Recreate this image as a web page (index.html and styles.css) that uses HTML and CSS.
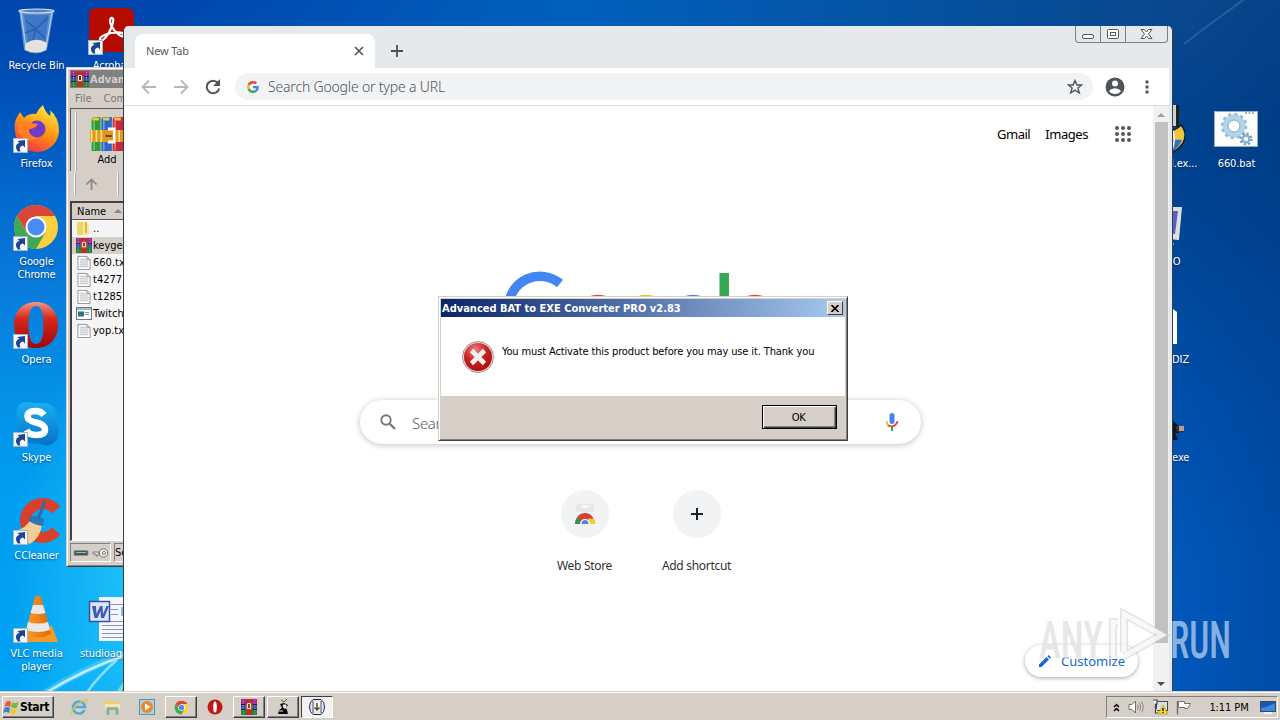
FILE: index.html
```html
<!DOCTYPE html>
<html lang="en">
    <head>
        <meta charset="utf-8">
        <title>Desktop</title>
        <link rel="stylesheet" href="styles.css">
    </head>
    <body>
        <!-- shared icons -->
        <svg class="defs" width="0" height="0">
            <defs>
                <linearGradient id="gOpera" x1="0" y1="0" x2="0" y2="1">
                    <stop offset="0" stop-color="#f09888"/><stop offset=".35" stop-color="#d8281c"/><stop offset="1" stop-color="#a00808"/>
                </linearGradient>
                <linearGradient id="gFox" x1=".8" y1="0" x2=".3" y2="1">
                    <stop offset="0" stop-color="#fff04a"/><stop offset=".5" stop-color="#ff980e"/><stop offset="1" stop-color="#f5304a"/>
                </linearGradient>
                <linearGradient id="gSkype" x1="0" y1="0" x2="0" y2="1">
                    <stop offset="0" stop-color="#1ab0f0"/><stop offset="1" stop-color="#0672c8"/>
                </linearGradient>
                <linearGradient id="gCone" x1="0" y1="0" x2="1" y2="0">
                    <stop offset="0" stop-color="#ff9a2e"/><stop offset="1" stop-color="#e06a00"/>
                </linearGradient>
                <radialGradient id="gErr" cx=".4" cy=".25" r=".8">
                    <stop offset="0" stop-color="#e88080"/><stop offset=".5" stop-color="#c82420"/><stop offset="1" stop-color="#a80c0c"/>
                </radialGradient>
            </defs>
            <symbol id="arrow" viewBox="0 0 15 15">
                <rect x=".5" y=".5" width="14" height="14" fill="#f4f6fa" stroke="#a8b4c4"/>
                <path d="M5 13.500C1.500 9.500 3 5.500 6.500 5L4.500 3L12 2V9.500L10 7.500C7 8 6 10 7.500 13.500Z" fill="#1c4590"/>
            </symbol>
            <symbol id="chrome" viewBox="0 0 48 48">
                <circle cx="24" cy="24" r="22" fill="#fcd03f"/>
                <path d="M24 13H43.050A22 22 0 0 0 4.950 13L14.500 29Z" fill="#d9473a"/>
                <path d="M4.950 13A22 22 0 0 0 24 46L33.500 29.500L24 34L14.500 29.500Z" fill="#3fa757"/>
                <circle cx="24" cy="24" r="10.500" fill="#fff"/>
                <circle cx="24" cy="24" r="8.500" fill="#4a8af4"/>
            </symbol>
            <symbol id="opera" viewBox="0 0 48 48">
                <path fill-rule="evenodd" fill="url(#gOpera)" d="M24 1C38 1 46 11 46 24S38 47 24 47S2 37 2 24S10 1 24 1ZM24 5C18 5 16.500 14 16.500 24S18 43 24 43S31.500 34 31.500 24S30 5 24 5Z"/>
            </symbol>
            <symbol id="rar" viewBox="0 0 18 16" preserveAspectRatio="none">
                <path fill="#a02890" d="M0 0H18V5H0Z"/><path fill="#2458b8" d="M0 5.500H18V10H0Z"/><path fill="#20883c" d="M0 10.500H18V16H0Z"/>
                <path fill="#300c40" d="M0 5H18V6H0ZM0 10H18V11H0Z"/>
                <path fill="#c82c20" d="M6 0H12V16H6Z"/><path fill="#a86028" d="M5 5H13V11H5Z"/>
                <path fill="#702020" stroke="#fff" d="M7.500 4.500H10.500V9.500H7.500Z"/>
                <path fill="none" stroke="#e8d8b0" stroke-dasharray="1 1.500" d="M2.500 1V15M15.500 1V15" opacity=".7"/>
            </symbol>
            <symbol id="txt" viewBox="0 0 14 16">
                <path d="M.5 1.500H10L13.500 5V15.500H.5Z" fill="#fdfdfd" stroke="#8c9498"/>
                <path d="M10 1.500V5H13.500" fill="none" stroke="#8c9498"/>
                <path d="M2.500 4.500H9M2.500 6.500H11.500M2.500 8.500H11.500M2.500 10.500H11.500M2.500 12.500H11.500" stroke="#b4bcc4"/>
            </symbol>
            <symbol id="gmark" viewBox="0 0 48 48">
                <path fill="#ea4335" d="M24 9.500c3.540 0 6.710 1.220 9.210 3.600l6.850-6.850C35.900 2.380 30.470 0 24 0 14.620 0 6.510 5.380 2.560 13.220l7.980 6.190C12.430 13.720 17.740 9.500 24 9.500z"/>
                <path fill="#4285f4" d="M46.980 24.550c0-1.570-.15-3.090-.38-4.550H24v9.020h12.940c-.58 2.960-2.260 5.480-4.780 7.180l7.730 6c4.510-4.180 7.090-10.360 7.090-17.650z"/>
                <path fill="#fbbc05" d="M10.530 28.590c-.48-1.450-.76-2.990-.76-4.590s.27-3.140.76-4.590l-7.980-6.190C.92 16.460 0 20.120 0 24c0 3.880.92 7.540 2.560 10.780l7.970-6.190z"/>
                <path fill="#34a853" d="M24 48c6.480 0 11.930-2.130 15.890-5.810l-7.730-6c-2.150 1.450-4.920 2.300-8.160 2.300-6.260 0-11.570-4.220-13.470-9.910l-7.980 6.190C6.510 42.620 14.620 48 24 48z"/>
            </symbol>
            <symbol id="winicon" viewBox="0 0 16 14">
                <rect x=".5" y=".5" width="15" height="12" fill="#fff" stroke="#6c7888"/>
                <path d="M1 2H15" stroke="#a8b8cc" stroke-width="2"/>
                <rect x="2" y="4.500" width="6" height="5" fill="#2c7484"/><path d="M9 5.500H13M9 7.500H13" stroke="#70a080"/>
            </symbol>
        </svg>

        <div class="desktop">
            <svg class="beams" viewBox="0 0 1280 692">
                <path d="M40 696Q80 670 126 654" fill="none" stroke="#5fd4fa" stroke-width="7" opacity=".5"/>
                <path d="M44 694Q82 670 126 655" fill="none" stroke="#d4f6ff" stroke-width="2.500" opacity=".85"/>
                <path d="M86 694Q98 676 118 659" fill="none" stroke="#b8f0fc" stroke-width="2.500" opacity=".7"/>
                <path d="M116 696L128 678" fill="none" stroke="#7ce8c8" stroke-width="4" opacity=".8"/>
                <path d="M1184 44Q1215 20 1246 -2" fill="none" stroke="#6a98cc" stroke-width="2" opacity=".3"/>
            </svg>

            <div class="icons left">
                <div class="shortcut">
                    <svg width="48" height="48" viewBox="0 0 48 48">
                        <path d="M7 3L12 43Q24 50 35 43L42 3Z" fill="#a8c8ec" opacity=".55"/>
                        <path d="M12 8L16 36L33 36L37 8Z" fill="#2c68c0" opacity=".6"/>
                        <path d="M14 14L24 22L36 10M13 26L24 22L33 32M24 22L20 36" fill="none" stroke="#1c50a4" stroke-width="1.500" opacity=".6"/>
                        <path d="M9 5L14 41M40 5L34 41" stroke="#d8e8f8" stroke-width="1.200" opacity=".7"/>
                        <path d="M13 37Q24 29 35 36L34 43Q24 48 13 43Z" fill="#e4e2dc"/>
                        <ellipse cx="24.500" cy="4" rx="17.500" ry="2" fill="#5484b8" stroke="#d4e4f4" stroke-width="1.200"/>
                    </svg>
                    <span>Recycle Bin</span>
                </div>
                <div class="shortcut">
                    <svg width="48" height="48" viewBox="0 0 48 48">
                        <path fill="url(#gFox)" d="M4 14L8 7L12 13Q17 8 24 9Q26 4 31 0Q33 7 38 11Q39 7 38 5Q47 13 47 25A22 21.500 0 0 1 3 26Q2 19 4 14Z"/>
                        <circle cx="25" cy="24" r="8.500" fill="#6f3bc8"/>
                        <path d="M6 16Q14 15 18 18L26 19Q23 24 17 24Q16 32 26 33Q13 40 6 26Z" fill="#ff7f22"/>
                    </svg>
                    <svg class="arrow"><use href="#arrow"/></svg>
                    <span>Firefox</span>
                </div>
                <div class="shortcut">
                    <svg width="48" height="48"><use href="#chrome"/></svg>
                    <svg class="arrow"><use href="#arrow"/></svg>
                    <span>Google Chrome</span>
                </div>
                <div class="shortcut">
                    <svg width="48" height="48"><use href="#opera"/></svg>
                    <svg class="arrow"><use href="#arrow"/></svg>
                    <span>Opera</span>
                </div>
                <div class="shortcut">
                    <svg width="48" height="48" viewBox="0 0 48 48">
                        <path fill="url(#gSkype)" d="M5 9Q8 2 16 3Q20 4 24 4H34Q44 6 45 16Q45 22 46 28Q49 42 38 46Q33 47 28 45Q12 46 8 35Q3 22 5 9Z"/>
                        <path d="M32 16Q29 12 23.500 12Q15.500 12 15.500 17.500Q15.500 21.500 24 23.500Q33 25.500 33 30.500Q33 36 24 36Q17 36 14.500 31" fill="none" stroke="#fff" stroke-width="6.500"/>
                    </svg>
                    <svg class="arrow"><use href="#arrow"/></svg>
                    <span>Skype</span>
                </div>
                <div class="shortcut">
                    <svg width="48" height="48" viewBox="0 0 48 48">
                        <path d="M44 13A17 17 0 1 0 44 34" fill="none" stroke="#d8402c" stroke-width="11"/>
                        <path d="M4 34Q14 31 19 22L30 27Q29 40 18 47Q8 42 4 34Z" fill="#f3cf98"/>
                        <path d="M17 20Q24 17 32 22L31 29Q22 28 17 24Z" fill="#2878b8"/>
                        <path d="M26 22L33 4" stroke="#3468a8" stroke-width="3"/>
                    </svg>
                    <svg class="arrow"><use href="#arrow"/></svg>
                    <span>CCleaner</span>
                </div>
                <div class="shortcut">
                    <svg width="48" height="48" viewBox="0 0 48 48">
                        <path d="M10 33L40 31L46 47H5Z" fill="#f59a28"/>
                        <path d="M23 2Q26 -1 29 2L39 39Q26 46 13 39Z" fill="url(#gCone)"/>
                        <path d="M21 10H31L33.500 18Q26 20 18.500 18ZM16 27Q26 30 36 27L38 35Q26 39 14 35Z" fill="#e8e8e8"/>
                    </svg>
                    <svg class="arrow"><use href="#arrow"/></svg>
                    <span>VLC media player</span>
                </div>
            </div>

            <div class="icons second">
                <div class="shortcut">
                    <svg width="48" height="48" viewBox="0 0 48 48">
                        <rect x="2" y="1" width="45" height="44" rx="7" fill="#b30b00"/>
                        <path d="M13 33Q12 29 24 26Q36 24 37 28Q35 32 27 23Q21 15 24 11Q28 10 25 19Q21 29 16 33Q13 35 13 33Z" fill="none" stroke="#fff" stroke-width="2.200"/>
                    </svg>
                    <svg class="arrow"><use href="#arrow"/></svg>
                    <span>Acrobat</span>
                </div>
                <div class="shortcut last">
                    <svg width="48" height="48" viewBox="0 0 48 48">
                        <path d="M12 2H48V46H12Z" fill="#f6f8fc"/>
                        <path d="M24 9.500H46M24 14.500H31M24 19.500H31M15 26.500H45M15 30.500H45M15 34.500H45M15 38.500H45M15 42.500H45" stroke="#8494c8"/>
                        <rect x="34" y="12" width="13" height="9" fill="#8cb4e8"/>
                        <rect x="2.500" y="6.500" width="20" height="20" fill="#dce4f8" stroke="#3454a8" stroke-width="1.500"/>
                        <path d="M5 11H9L9.500 19L13 11H15.500L16 19L19.500 11H22L17 23H14L13.500 16L10.500 23H7.500Z" fill="#3c5cb4"/>
                    </svg>
                    <span>studioagen...</span>
                </div>
            </div>

            <div class="icons third">
                <div class="shortcut">
                    <svg width="48" height="48" viewBox="0 0 48 48">
                        <path d="M28 0H42V22H28Z" fill="#202020"/>
                        <path d="M26 0H39V21H26Z" fill="#d0d0cc"/>
                        <path d="M26 26Q38 27 44 20Q51 28 46 38Q41 46 32 48L26 40Z" fill="#ecc440" stroke="#181c20" stroke-width="1.500"/>
                        <path d="M26 34L45 35Q41 45 32 47Z" fill="#3070c0"/>
                        <path d="M36 26Q39 35 35 45" fill="none" stroke="#fff" stroke-width="1.500"/>
                    </svg>
                    <span>Advanced.ex...</span>
                </div>
                <div class="shortcut">
                    <svg width="48" height="48" viewBox="0 0 48 48">
                        <path d="M18 4L45 4L42 37L18 35Z" fill="#dedede"/>
                        <path d="M20 8H41L38 31L20 30Z" fill="#5a60c8"/>
                        <path d="M28 37L36 39L37 42H28Z" fill="#b8b8c0"/>
                    </svg>
                    <span class="nfo">KEY.NFO</span>
                </div>
                <div class="shortcut">
                    <svg width="48" height="48" viewBox="0 0 48 48">
                        <path d="M4 8H36L40 11V43H4Z" fill="#fcfcfc"/>
                    </svg>
                    <span>FILE_ID.DIZ</span>
                </div>
                <div class="shortcut">
                    <svg width="48" height="48" viewBox="0 0 48 48">
                        <path d="M30 18H36V22L42 27V34H38L41 41H18V24Z" fill="#101418"/>
                        <path d="M38 27H47V33H40Z" fill="#303438"/>
                        <path d="M42 27H47V32H42Z" fill="#b89c90"/>
                    </svg>
                    <span>keygen.exe</span>
                </div>
            </div>

            <div class="icons fourth">
                <div class="shortcut">
                    <svg width="48" height="48" viewBox="0 0 48 48">
                        <rect x="2.500" y="6.500" width="43" height="35" fill="#fafcfc" stroke="#9cacbc"/>
                        <path d="M33 8H43" stroke="#607080" stroke-dasharray="2 1.500"/>
                        <circle cx="22" cy="21" r="8.500" fill="none" stroke="#b4d4ea" stroke-width="6"/>
                        <circle cx="22" cy="21" r="12" fill="none" stroke="#98bcd8" stroke-width="2.500" stroke-dasharray="3.100 3.180"/>
                        <circle cx="22" cy="21" r="6" fill="#fff" stroke="#88a4bc"/>
                        <circle cx="34" cy="34" r="3.500" fill="none" stroke="#8cb0cc" stroke-width="2.500"/>
                        <circle cx="34" cy="34" r="5.500" fill="none" stroke="#7094b8" stroke-width="2" stroke-dasharray="2 2.320"/>
                    </svg>
                    <span>660.bat</span>
                </div>
            </div>

            <!-- WinRAR window -->
            <div class="window winrar">
                <div class="rar-title"><svg width="18" height="16"><use href="#rar"/></svg>Advanced BAT</div>
                <div class="rar-menu"><span>File</span><span>Commands</span></div>
                <div class="rar-tools">
                    <div class="rar-add">
                        <svg width="34" height="36" viewBox="0 0 42 36" preserveAspectRatio="none">
                            <path d="M2 4Q2 1 6 1H13V35H2Z" fill="#2c9c34"/><path d="M14 4Q14 1 18 1H27V35H14Z" fill="#2c68c8"/><path d="M28 4Q28 1 32 1H41V35H28Z" fill="#c82838"/>
                            <path d="M3 3H11M16 3H24M30 3H38" stroke="#f0c840" stroke-width="3"/>
                            <path d="M5 5V34M17 5V34M31 5V34" stroke="#fff" opacity=".35" stroke-width="2"/>
                            <path d="M0 14H42V26H0Z" fill="#e09820"/><path d="M2 14V26M8 14V26M14 14V26M36 14V26" stroke="#ffe080" stroke-width="2"/>
                            <path d="M22 13H30V26H22" fill="none" stroke="#fff" stroke-width="3"/><path d="M19 20H27" stroke="#704810" stroke-width="2"/>
                        </svg>
                        <span>Add</span>
                    </div>
                </div>
                <div class="rar-path">
                    <svg width="13" height="12" viewBox="0 0 13 12"><path d="M6.500 12V2M1.500 6.500L6.500 1.500L11.500 6.500" fill="none" stroke="#8c8884" stroke-width="1.700"/></svg>
                </div>
                <div class="rar-list">
                    <div class="rar-head">Name <i></i></div>
                    <div class="rar-row">
                        <svg width="16" height="15" viewBox="0 0 16 15"><path d="M1 1H8V14H1Z" fill="#f0d468"/><path d="M7 2H13V14H7Z" fill="#f8e8a0"/><path d="M9 1H11V12H9Z" fill="#e0b838"/></svg>..
                    </div>
                    <div class="rar-row selected"><svg width="16" height="15"><use href="#rar"/></svg>keygen.exe</div>
                    <div class="rar-row"><svg width="16" height="15"><use href="#txt"/></svg>660.txt</div>
                    <div class="rar-row"><svg width="16" height="15"><use href="#txt"/></svg>t4277.txt</div>
                    <div class="rar-row"><svg width="16" height="15"><use href="#txt"/></svg>t12857.txt</div>
                    <div class="rar-row"><svg width="16" height="14"><use href="#winicon"/></svg>Twitch</div>
                    <div class="rar-row"><svg width="16" height="15"><use href="#txt"/></svg>yop.txt</div>
                </div>
                <div class="rar-status">
                    <div class="rar-cell">
                        <svg width="38" height="12" viewBox="0 0 38 12">
                            <rect x="3" y="3.500" width="14" height="5" rx="1" fill="#485858" stroke="#909090"/><path d="M5 5.500H15" stroke="#a0b8b0"/>
                            <circle cx="32.500" cy="6" r="4.200" fill="#eee" stroke="#707070"/><circle cx="33" cy="6" r="1.500" fill="#fff" stroke="#707070"/>
                            <path d="M22 5H28V7H27V9H25V7H22Z" fill="#ddd" stroke="#707070" stroke-width=".8"/>
                        </svg>
                    </div>
                    <div class="rar-cell">Selected</div>
                </div>
            </div>

            <!-- Browser window -->
            <div class="window browser">
                <div class="tabstrip">
                    <div class="tab">
                        <span>New Tab</span>
                        <svg width="10" height="10" viewBox="0 0 10 10"><path d="M1 1L9 9M9 1L1 9" stroke="#55595d" stroke-width="1.700"/></svg>
                    </div>
                    <svg class="newtab" width="12" height="12" viewBox="0 0 12 12"><path d="M6 0V12M0 6H12" stroke="#4d5156" stroke-width="1.800"/></svg>
                    <div class="caption">
                        <svg width="24" height="16" viewBox="0 0 24 16"><rect x="6.500" y="8.500" width="11" height="4" rx="1.500" fill="#fff" stroke="#52565c"/></svg>
                        <svg width="24" height="16" viewBox="0 0 24 16"><rect x="6.500" y="3.500" width="11" height="9" rx="1" fill="#fff" stroke="#52565c"/><rect x="9.500" y="6.500" width="5" height="3" fill="#fff" stroke="#52565c"/></svg>
                        <svg width="41" height="16" viewBox="0 0 41 16"><path d="M15 3.500H18.500L20.500 6L22.500 3.500H26L22.500 8L26 12.500H22.500L20.500 10L18.500 12.500H15L18.500 8Z" fill="#fff" stroke="#52565c"/></svg>
                    </div>
                </div>
                <div class="toolbar">
                    <svg width="16" height="16" viewBox="0 0 16 16"><path d="M15 8H2M8 1.500L1.500 8L8 14.500" fill="none" stroke="#b4b6b8" stroke-width="1.800"/></svg>
                    <svg width="16" height="16" viewBox="0 0 16 16"><path d="M1 8H14M8 1.500L14.500 8L8 14.500" fill="none" stroke="#b4b6b8" stroke-width="1.800"/></svg>
                    <svg width="16" height="16" viewBox="0 0 16 16"><path d="M13 4A6.300 6.300 0 1 0 14.200 9.500" fill="none" stroke="#505458" stroke-width="2"/><path d="M15 0V7H8Z" fill="#505458"/></svg>
                    <div class="omnibox">
                        <svg width="12" height="12"><use href="#gmark"/></svg>
                        <span>Search Google or type a URL</span>
                        <svg width="16" height="16" viewBox="0 0 16 16"><path d="M8 1.500L9.900 6H14.700L10.900 9L12.300 14L8 11.200L3.700 14L5.100 9L1.300 6H6.100Z" fill="none" stroke="#505458" stroke-width="1.400"/></svg>
                    </div>
                    <svg width="20" height="20" viewBox="0 0 20 20"><circle cx="10" cy="10" r="9.500" fill="#505458"/><circle cx="10" cy="6.500" r="3" fill="#fff"/><path d="M4 14Q6 11.300 10 11.300T16 14Q14 17 10 17T4 14Z" fill="#fff"/></svg>
                    <svg class="dots" width="4" height="14" viewBox="0 0 4 14"><path d="M.5 .5H3.500V3.500H.5ZM.5 5.500H3.500V8.500H.5ZM.5 10.500H3.500V13.500H.5Z" fill="#505458"/></svg>
                </div>
                <div class="page">
                    <div class="content">
                        <div class="links">
                            <span>Gmail</span>
                            <span>Images</span>
                            <svg width="16" height="16" viewBox="0 0 16 16" fill="#55585c">
                                <circle cx="2" cy="2" r="2"/><circle cx="8" cy="2" r="2"/><circle cx="14" cy="2" r="2"/>
                                <circle cx="2" cy="8" r="2"/><circle cx="8" cy="8" r="2"/><circle cx="14" cy="8" r="2"/>
                                <circle cx="2" cy="14" r="2"/><circle cx="8" cy="14" r="2"/><circle cx="14" cy="14" r="2"/>
                            </svg>
                        </div>
                        <svg class="logo" width="272" height="92" viewBox="504 270 272 92" fill="none" stroke-width="9.500">
                            <path d="M559 283.500A31.500 31.500 0 0 0 507.500 306A31.500 31.500 0 0 0 571 308H540" stroke="#4285f4"/>
                            <circle cx="597" cy="319.500" r="20" stroke="#ea4335"/>
                            <circle cx="645" cy="319.500" r="20" stroke="#fbbc05"/>
                            <circle cx="692" cy="319.500" r="20" stroke="#4285f4"/>
                            <path d="M723.200 273V342" stroke="#34a853"/>
                            <circle cx="754" cy="319.500" r="20" stroke="#ea4335"/>
                        </svg>
                        <div class="searchbox">
                            <svg width="16" height="16" viewBox="0 0 16 16"><circle cx="6" cy="6" r="4.700" fill="none" stroke="#757779" stroke-width="1.900"/><path d="M9.500 9.500L15 15" stroke="#757779" stroke-width="2.200"/></svg>
                            <span>Search Google or type a URL</span>
                            <svg width="14" height="20" viewBox="0 0 14 20">
                                <rect x="4.500" y="1" width="5" height="11" rx="2.500" fill="#4285f4"/>
                                <path d="M1.500 9A6 6 0 0 0 3.500 13.500" fill="none" stroke="#fbbc05" stroke-width="1.800"/>
                                <path d="M3 13.200A6 6 0 0 0 12.500 9" fill="none" stroke="#ea4335" stroke-width="1.800"/>
                                <path d="M7 15V19" stroke="#34a853" stroke-width="2"/>
                            </svg>
                        </div>
                        <div class="tiles">
                            <div class="tile">
                                <div class="circle">
                                    <svg width="20" height="20" viewBox="0 0 20 20">
                                        <path d="M1 0H19V8H1Z" fill="#e8e8e8"/><path d="M7 2.500H13" stroke="#fff" stroke-width="2"/>
                                        <path d="M0 20A10 11 0 0 1 20 20Z" fill="#d04436"/>
                                        <path d="M0 20Q0 16 2.500 13L7 20Z" fill="#2c9850"/><path d="M20 20Q20 17 18.500 14.500H13L13.500 20Z" fill="#fccc30"/>
                                        <path d="M5 20A5 5 0 0 1 15 20Z" fill="#fff"/><path d="M6.500 20A3.500 4 0 0 1 13.500 20Z" fill="#4488f0"/>
                                    </svg>
                                </div>
                                <span>Web Store</span>
                            </div>
                            <div class="tile">
                                <div class="circle">
                                    <svg width="12" height="12" viewBox="0 0 12 12"><path d="M6 0V12M0 6H12" stroke="#202124" stroke-width="2"/></svg>
                                </div>
                                <span>Add shortcut</span>
                            </div>
                        </div>
                        <div class="customize">
                            <svg width="12" height="12" viewBox="0 0 12 12"><path d="M0 12V9.500L7.500 2L10 4.500L2.500 12ZM8.300 1.200L9.500 0L12 2.500L10.800 3.700Z" fill="#1967d2"/></svg>
                            <span>Customize</span>
                        </div>
                    </div>
                    <div class="scrollbar"><i class="up"></i><div class="thumb"></div><i class="down"></i></div>
                </div>
            </div>

            <!-- Error dialog -->
            <div class="window dialog">
                <div class="dialog-title">
                    <span>Advanced BAT to EXE Converter PRO v2.83</span>
                    <div class="close"><svg width="8" height="7" viewBox="0 0 8 7"><path d="M.5 0L7.500 7M7.500 0L.5 7" stroke="#000" stroke-width="1.600"/></svg></div>
                </div>
                <div class="dialog-body">
                    <svg width="32" height="32" viewBox="0 0 32 32">
                        <circle cx="16" cy="16" r="15.500" fill="#e4e4e4" stroke="#a86c6c" stroke-width=".8"/>
                        <circle cx="16" cy="16" r="14" fill="url(#gErr)"/>
                        <path d="M9.500 9.500L22.500 22.500M22.500 9.500L9.500 22.500" stroke="#f0f0f0" stroke-width="4.600"/>
                    </svg>
                    <p>You must Activate this product before you may use it. Thank you</p>
                </div>
                <div class="dialog-footer"><button>OK</button></div>
            </div>

            <!-- Watermark -->
            <svg class="watermark" width="204" height="66" viewBox="0 0 204 66">
                <g class="mark-text">
                    <text x="3" y="52" textLength="64" lengthAdjust="spacingAndGlyphs" fill="#e2e2e2">ANY</text>
                    <text x="134" y="52" textLength="61" lengthAdjust="spacingAndGlyphs" fill="#a9c8ec">RUN</text>
                </g>
                <path d="M77 53V16H82M88 46V8L126 29L88 50" fill="none" stroke="#c8c8c8" stroke-width="8" opacity=".5"/>
                <path d="M77 53V16H82M88 46V8L126 29L88 50" fill="none" stroke="#fff" stroke-width="5" opacity=".75"/>
            </svg>
        </div>

        <div class="taskbar">
            <div class="start">
                <svg width="16" height="15" viewBox="0 0 16 15">
                    <path d="M3 2Q6 0 8 2L7 7Q5 5 1.500 7Z" fill="#e8582c"/><path d="M9 2.500Q12 4 15.500 2L14 7.500Q11 9 8 7Z" fill="#74b83c"/>
                    <path d="M1.500 8Q5 6 7 8L6 13Q3 11 0 13Z" fill="#3c80d0"/><path d="M8 8.500Q11 10 14 8.500L12.500 13.500Q9 15 7 13Z" fill="#f4c430"/>
                </svg>
                Start
            </div>
            <div class="tasks">
                <div class="task"><svg width="18" height="18" viewBox="0 0 18 18"><path d="M14.500 12A6 6 0 1 1 15 9H4" fill="none" stroke="#4cacdf" stroke-width="2.500"/><path d="M2 16Q0 13 7 7T17 2Q17 4 15 6" fill="none" stroke="#e8c040" stroke-width="1.300"/></svg></div>
                <div class="task"><svg width="18" height="16" viewBox="0 0 18 16"><path d="M1 1H7L9 3H16V14H1Z" fill="#ecce74"/><path d="M1 5H16V10H1Z" fill="#f8e8a8"/><path d="M4 16V9.500H13V16" fill="none" stroke="#68b0d8" stroke-width="2.500"/></svg></div>
                <div class="task"><svg width="16" height="16" viewBox="0 0 16 16"><rect x=".5" y=".5" width="15" height="15" fill="#a8d0f0" stroke="#5890c0"/><circle cx="8" cy="8" r="6" fill="#f08820"/><path d="M6 4.500L11.500 8L6 11.500Z" fill="#fff"/></svg></div>
                <div class="task raised"><svg width="15" height="15"><use href="#chrome"/></svg></div>
                <div class="task"><svg width="16" height="16" viewBox="0 0 16 16"><circle cx="8" cy="8" r="7.500" fill="#c01818"/><ellipse cx="8" cy="8" rx="1.800" ry="5.500" fill="#fff"/></svg></div>
                <div class="task raised"><svg width="16" height="16"><use href="#rar"/></svg></div>
                <div class="task raised"><svg width="16" height="16" viewBox="0 0 16 16"><path d="M5 5L9 4L13 6L11 9L12 11L13 15H3L4 11L7 9Z" fill="#080808"/><path d="M6 1L9 3L12 0" stroke="#555" fill="none"/><path d="M8 6H11V9H9ZM4 12H8" stroke="#eee" fill="#eee"/></svg></div>
                <div class="task active"><svg width="16" height="16" viewBox="0 0 16 16"><path d="M4 .5H12Q15.500 3 15.500 8T12 15.500H4Q.5 13 .5 8T4 .5Z" fill="#e8e8f0" stroke="#202848"/><path d="M4 2V14M12 2V14" stroke="#485080"/><path d="M5.500 3H10.500V12H5.500Z" fill="#fff"/><path d="M8 4V11M5.500 8.500L8 11L10.500 8.500" stroke="#505010" stroke-width="1.500" fill="none"/></svg></div>
            </div>
            <div class="tray">
                <svg width="7" height="9" viewBox="0 0 7 9"><path d="M1 4L3.500 1.500L6 4M1 8L3.500 5.500L6 8" fill="none" stroke="#000" stroke-width="1.500"/></svg>
                <svg width="16" height="14" viewBox="0 0 16 14"><path d="M1 4.500H4L7.500 1V13L4 9.500H1Z" fill="#fff" stroke="#707070"/><path d="M9.500 4.500Q11 7 9.500 9.500M11.500 3Q14 7 11.500 11M13.500 1.500Q17 7 13.500 12.500" fill="none" stroke="#888"/></svg>
                <svg width="16" height="16" viewBox="0 0 16 16"><rect x="4.500" y="2.500" width="11" height="9" fill="#d8e0e8" stroke="#484848"/><path d="M1 1H5V5H3.500V14H6" fill="#fff" stroke="#404040" stroke-width="1.200"/><path d="M11 6L16 15H6Z" fill="#f8d820" stroke="#b09010" stroke-width=".6"/><path d="M11 9V12M11 13V14" stroke="#000" stroke-width="1.300"/></svg>
                <svg width="16" height="15" viewBox="0 0 16 15"><path d="M1.500 1V14.500" stroke="#707070" stroke-width="1.500"/><path d="M2.500 1.500H8.500V3.500H14.500L13 6L11.500 8.500H8.500V7.500H2.500Z" fill="#fff" stroke="#707070"/></svg>
                <span>1:11 PM</span>
                <svg width="16" height="13" viewBox="0 0 16 13"><rect x=".5" y=".5" width="15" height="10" fill="#1c54b4" stroke="#404858"/><path d="M1 7Q8 6 15 2V10H1Z" fill="#3c88e0"/><path d="M4 12H12" stroke="#fff" stroke-width="1.500"/></svg>
            </div>
        </div>
    </body>
</html>
```

FILE: styles.css
```css
body {
    margin: 0;
    width: 1280px;
    height: 720px;
    overflow: hidden;
    display: flex;
    flex-direction: column;
    font-family: "DejaVu Sans Condensed", "DejaVu Sans", sans-serif;
    font-stretch: condensed;
    font-size: 11px;
    line-height: 13px;
    color: #000;
}

svg {
    display: block;
    flex: none;
}

.defs {
    position: absolute;
}

.desktop {
    position: relative;
    height: 692px;
    overflow: hidden;
    background:
        linear-gradient(90deg, rgba(0, 50, 120, 0) 0, rgba(0, 50, 120, .3) 100%) right / 110px 100% no-repeat,
        linear-gradient(180deg, #0a488e 0, #00428e 130px, #004494 220px, #0050ac 400px, #0058ba 560px, #0058bc 100%) right / 112px 100% no-repeat,
        radial-gradient(ellipse 130px 280px at 140px 600px, rgba(40, 205, 250, .8), rgba(30, 190, 250, 0)),
        linear-gradient(90deg, rgba(0, 80, 190, 0) 12%, rgba(0, 96, 188, 1) 45%, #09488e 91%),
        linear-gradient(180deg, #0045ac 0, #0050b8 90px, #0468cc 190px, #087cdc 290px, #0490e6 390px, #009ef0 500px, #00a2f6 692px);
}

.beams {
    position: absolute;
    left: 0;
    top: 0;
    width: 1280px;
    height: 692px;
}

/* desktop icons */
.icons {
    position: absolute;
    top: 0;
    display: flex;
    flex-direction: column;
}

.left {
    left: -2px;
}

.second {
    left: 73px;
}

.third {
    left: 1123px;
    top: 98px;
}

.fourth {
    left: 1198px;
    top: 98px;
}

.shortcut {
    position: relative;
    width: 75px;
    height: 98px;
    display: flex;
    flex-direction: column;
    align-items: center;
    color: #fff;
    text-align: center;
}

.shortcut > svg:first-child {
    margin: 7px 0 4px;
}

.shortcut span {
    max-width: 64px;
    margin-left: 2px;
    letter-spacing: -.1px;
    text-shadow: 0 1px 2px rgba(0, 20, 60, .6);
}

.second .shortcut span,
.third .shortcut span {
    max-width: none;
}

.third .nfo {
    margin-left: 0;
}

.shortcut .arrow {
    position: absolute;
    left: 15px;
    top: 40px;
    width: 15px;
    height: 15px;
}

.last {
    margin-top: 490px;
}

.window {
    position: absolute;
    box-sizing: border-box;
    display: flex;
    flex-direction: column;
}

/* WinRAR */
.winrar {
    left: 66px;
    top: 67px;
    width: 300px;
    height: 500px;
    padding: 2px 2px 2px 3px;
    background: #d5cfc8;
    border: 1px solid #404040;
    border-top-color: #d5cfc8;
    border-left-color: #d5cfc8;
    box-shadow: inset 1px 1px #fff, inset -1px -1px #808080;
    white-space: nowrap;
}

.rar-title {
    height: 18px;
    display: flex;
    align-items: center;
    gap: 1px;
    padding-left: 1px;
    background: #808080;
    color: #d5cfc8;
    font-weight: bold;
}

.rar-menu {
    height: 20px;
    display: flex;
    align-items: center;
    gap: 12px;
    padding-left: 5px;
    color: #777;
}

.rar-tools {
    height: 62px;
    border-top: 1px solid #555;
    border-left: 1px solid #555;
    padding-left: 4px;
    display: flex;
}

.rar-add {
    border-left: 2px ridge #fff;
    width: 62px;
    margin-top: 3px;
    display: flex;
    flex-direction: column;
    align-items: center;
    gap: 1px;
    padding-top: 4px;
    box-sizing: border-box;
}

.rar-path {
    width: 45px;
    height: 22px;
    margin: 2px 0 4px 4px;
    border-left: 2px ridge #fff;
    border-right: 2px ridge #fff;
    display: flex;
    align-items: center;
    padding-left: 9px;
    box-sizing: border-box;
}

.rar-list {
    flex: 1;
    margin-top: 2px;
    background: #f5f5f5;
    border: 2px solid #443e48;
    border-bottom: 1px solid #fff;
}

.rar-head {
    height: 17px;
    display: flex;
    align-items: center;
    gap: 8px;
    padding-left: 5px;
    background: #d5cfc8;
    border-bottom: 1px solid #555;
    box-sizing: border-box;
}

.rar-head i {
    border: 4px solid transparent;
    border-top: 0;
    border-bottom-color: #888;
}

.rar-row {
    height: 17px;
    display: flex;
    align-items: center;
    gap: 1px;
    padding-left: 4px;
}

.selected {
    background: #d5cfc8;
}

.rar-status {
    height: 21px;
    display: flex;
    gap: 3px;
    padding-top: 2px;
}

.rar-cell {
    width: 39px;
    height: 17px;
    display: flex;
    align-items: center;
    border: 1px solid #808080;
    border-right-color: #fff;
    border-bottom-color: #fff;
}

/* browser */
.browser {
    left: 123px;
    top: 26px;
    width: 1050px;
    height: 667px;
    padding-right: 3px;
    background: #e5e9ec;
    border-left: 1px solid #33404c;
    border-right: 1px solid #33404c;
    border-radius: 5px 5px 0 0;
    overflow: hidden;
    font-family: "Noto Sans", sans-serif;
    font-stretch: normal;
}

.tabstrip {
    flex: none;
    height: 42px;
    display: flex;
    align-items: flex-end;
    padding-left: 11px;
}

.tab {
    width: 240px;
    height: 34px;
    box-sizing: border-box;
    padding: 0 11px;
    display: flex;
    align-items: center;
    justify-content: space-between;
    background: #fff;
    border-radius: 8px 8px 0 0;
    color: #55585c;
    letter-spacing: -.15px;
}

.tab span {
    padding-bottom: 1px;
}

.newtab {
    margin: 0 auto 11px 16px;
}

.caption {
    align-self: flex-start;
    display: flex;
    margin-right: 1px;
    border: 1px solid #7c8086;
    border-top: 0;
    border-radius: 0 0 4px 4px;
}

.caption svg + svg {
    border-left: 1px solid #7c8086;
}

.toolbar {
    flex: none;
    height: 37px;
    display: flex;
    align-items: center;
    gap: 16px;
    padding: 0 20px 0 17px;
    background: #fff;
    border-bottom: 1px solid #dcdee0;
}

.omnibox {
    flex: 1;
    height: 27px;
    margin-right: -4px;
    margin-left: -2px;
    border-radius: 14px;
    padding: 0 10px 0 12px;
    display: flex;
    align-items: center;
    gap: 9px;
    background: #f1f3f4;
    color: #505458;
    font-size: 14px;
    font-weight: 300;
    letter-spacing: -.18px;
}

.dots {
    margin-left: 4px;
}

.omnibox span {
    flex: 1;
    padding-bottom: 1px;
}

.page {
    flex: 1;
    display: flex;
    background: #fff;
}

.content {
    flex: 1;
    display: flex;
    flex-direction: column;
    align-items: center;
    padding-left: 4px;
}

.links {
    align-self: stretch;
    display: flex;
    justify-content: flex-end;
    align-items: center;
    height: 16px;
    margin: 20px 22px 128px 0;
    font-size: 13px;
    letter-spacing: -.45px;
}

.links span {
    margin-right: 15px;
}

.links svg {
    margin-left: 12px;
}

.searchbox {
    width: 561px;
    height: 44px;
    margin-top: 38px;
    border-radius: 22px;
    box-sizing: border-box;
    padding: 0 22px 0 20px;
    display: flex;
    align-items: center;
    gap: 16px;
    box-shadow: 0 1px 6px rgba(32, 33, 36, .28);
    color: #606060;
    font-size: 15px;
    font-weight: 300;
}

.searchbox span {
    flex: 1;
    padding-top: 3px;
    letter-spacing: -.3px;
}

.tiles {
    display: flex;
    margin-top: 46px;
}

.tile {
    width: 112px;
    display: flex;
    flex-direction: column;
    align-items: center;
    gap: 21px;
    font-size: 12px;
    line-height: 14px;
    letter-spacing: -.3px;
    color: #303134;
}

.circle {
    width: 48px;
    height: 48px;
    border-radius: 50%;
    background: #f1f3f4;
    display: flex;
    align-items: center;
    justify-content: center;
}

.customize {
    align-self: flex-end;
    width: 113px;
    height: 32px;
    margin: 72px 15px 0 0;
    box-sizing: border-box;
    padding-left: 14px;
    border-radius: 16px;
    display: flex;
    align-items: center;
    gap: 10px;
    box-shadow: 0 1px 4px rgba(0, 0, 0, .35);
    color: #1967d2;
    font-size: 13px;
}

.scrollbar {
    width: 16px;
    background: #f1f1f1;
    display: flex;
    flex-direction: column;
    align-items: center;
    box-sizing: border-box;
    padding-top: 7px;
}

.thumb {
    width: 13px;
    height: 521px;
    margin-top: 5px;
    background: #c1c1c1;
}

.up {
    border: 4px solid transparent;
    border-top: 0;
    border-bottom-color: #a0a0a0;
}

.down {
    margin-top: 39px;
    border: 4px solid transparent;
    border-bottom: 0;
    border-top-color: #505050;
}

/* dialog */
.dialog {
    left: 438px;
    top: 296px;
    width: 410px;
    height: 145px;
    padding: 1px;
    background: #d6cfc8;
    border: 1px solid #404040;
    border-top-color: #d6cfc8;
    border-left-color: #d6cfc8;
    box-shadow: inset 1px 1px #fff, inset -1px -1px #808080;
}

.dialog-title {
    height: 18px;
    margin: 1px 1px 0;
    display: flex;
    align-items: center;
    justify-content: space-between;
    padding: 0 2px 0 1px;
    background: linear-gradient(90deg, #0a246a, #a6caf0);
    color: #fff;
    font-weight: bold;
}

.close {
    width: 14px;
    height: 12px;
    display: flex;
    align-items: center;
    justify-content: center;
    background: #d6cfc8;
    border: 1px solid #404040;
    border-top-color: #fff;
    border-left-color: #fff;
}

.dialog-body {
    height: 79px;
    margin: 0 1px;
    padding: 0 21px;
    display: flex;
    gap: 8px;
    background: #fff;
}

.dialog-body svg {
    margin-top: 24px;
}

.dialog-body p {
    margin: 28px 0 0;
    white-space: nowrap;
    letter-spacing: -.13px;
}

.dialog-footer {
    flex: 1;
    display: flex;
    align-items: center;
    justify-content: flex-end;
    padding: 0 9px 1px 0;
}

.dialog-footer button {
    width: 75px;
    height: 24px;
    padding: 0 2px 0 0;
    font: inherit;
    letter-spacing: -.3px;
    background: #d6cfc8;
    border: 1px solid #000;
    box-shadow: inset 1px 1px #fff, inset -1px -1px #404040, inset -2px -2px #808080;
}

.watermark {
    position: absolute;
    left: 1036px;
    top: 606px;
    overflow: visible;
}

.mark-text {
    font-family: Roboto, sans-serif;
    font-size: 51px;
    font-weight: 500;
    opacity: .8;
}

/* taskbar */
.taskbar {
    position: relative;
    height: 27px;
    border-top: 1px solid #fff;
    background: #d5cfc8;
    display: flex;
    align-items: center;
    box-shadow: 0 -1px #d5cfc8;
}

.start {
    width: 50px;
    height: 20px;
    margin: 1px 9px 0 2px;
    display: flex;
    align-items: center;
    gap: 1px;
    font-weight: bold;
    font-size: 12px;
    letter-spacing: -.3px;
}

.start,
.raised {
    border: 1px solid #404040;
    border-top-color: #fff;
    border-left-color: #fff;
    box-shadow: inset -1px -1px #808080;
}

.tasks {
    display: flex;
    gap: 2px;
    margin-top: 1px;
}

.task {
    width: 32px;
    height: 22px;
    box-sizing: border-box;
    display: flex;
    align-items: center;
    justify-content: center;
}

.active {
    background: #f4f2f0;
    border: 1px solid #404040;
    border-right-color: #fff;
    border-bottom-color: #fff;
}

.tray {
    width: 172px;
    height: 22px;
    margin: 1px 2px 0 auto;
    box-sizing: border-box;
    padding: 0 1px 0 6px;
    display: flex;
    align-items: center;
    gap: 8px;
    border: 1px solid #808080;
    border-right-color: #fff;
    border-bottom-color: #fff;
}

.tray span {
    margin: 0 auto;
    padding-left: 6px;
    letter-spacing: -.1px;
    white-space: nowrap;
}
```
